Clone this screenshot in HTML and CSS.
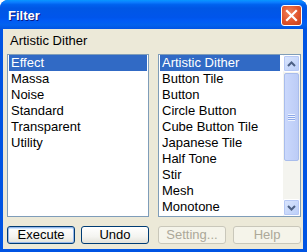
FILE: index.html
```html
<!DOCTYPE html>
<html lang="en">
<head>
<meta charset="UTF-8">
<title>Filter</title>
<link rel="stylesheet" href="styles.css">
</head>
<body>

<div class="window">
  <div class="titlebar">
    <span class="title">Filter</span>
    <button class="close-btn">
      <svg width="13" height="13" viewBox="0 0 13 13">
        <path d="M2 2 L11 11 M11 2 L2 11" stroke="#fff" stroke-width="2.2" stroke-linecap="square"/>
      </svg>
    </button>
  </div>

  <div class="client">
    <div class="current">Artistic Dither</div>

    <div class="lists">
      <ul class="listbox">
        <li class="selected">Effect</li>
        <li>Massa</li>
        <li>Noise</li>
        <li>Standard</li>
        <li>Transparent</li>
        <li>Utility</li>
      </ul>

      <div class="listbox scrolled">
        <ul class="items">
          <li class="selected">Artistic Dither</li>
          <li>Button Tile</li>
          <li>Button</li>
          <li>Circle Button</li>
          <li>Cube Button Tile</li>
          <li>Japanese Tile</li>
          <li>Half Tone</li>
          <li>Stir</li>
          <li>Mesh</li>
          <li>Monotone</li>
        </ul>
        <div class="scrollbar">
          <div class="scroll-btn">
            <svg width="9" height="6" viewBox="0 0 9 6"><path d="M1 5 L4.5 1.5 L8 5" fill="none" stroke="#4d6185" stroke-width="2"/></svg>
          </div>
          <div class="track">
            <div class="thumb">
              <div class="grip"></div>
            </div>
          </div>
          <div class="scroll-btn">
            <svg width="9" height="6" viewBox="0 0 9 6"><path d="M1 1 L4.5 4.5 L8 1" fill="none" stroke="#4d6185" stroke-width="2"/></svg>
          </div>
        </div>
      </div>
    </div>

    <div class="buttons">
      <div class="btn-group">
        <button class="btn focused">Execute</button>
        <button class="btn">Undo</button>
      </div>
      <div class="btn-group">
        <button class="btn" disabled>Setting...</button>
        <button class="btn" disabled>Help</button>
      </div>
    </div>
  </div>
</div>

</body>
</html>
```

FILE: styles.css
```css
* {
  margin: 0;
  padding: 0;
  box-sizing: border-box;
}

body {
  background: #fff;
  font-family: 'Liberation Sans', Arial, sans-serif;
  font-size: 13px;
  color: #000;
}

.window {
  width: 307px;
  height: 252px;
  background: #0054e3;
  border-radius: 8px 8px 0 0;
  display: flex;
  flex-direction: column;
  overflow: hidden;
}

.titlebar {
  height: 29px;
  display: flex;
  align-items: center;
  justify-content: space-between;
  padding: 0 5px 0 8px;
  background: linear-gradient(to bottom, #0997ff 0%, #0a7dff 8%, #0062ee 16%, #0057e5 28%, #0055eb 60%, #005bf5 72%, #0262ee 86%, #0054e3 100%);
}

.title {
  color: #fff;
  font-weight: bold;
  font-size: 13px;
  text-shadow: 1px 1px #0a1883;
  padding-top: 1px;
}

.close-btn {
  width: 21px;
  height: 21px;
  border: 1px solid #fff;
  border-radius: 3px;
  background: radial-gradient(circle at 40% 35%, #f0845d 0%, #e0532b 55%, #c4401c 100%);
  display: flex;
  align-items: center;
  justify-content: center;
  margin-top: 1px;
}

.client {
  flex: 1;
  margin: 0 4px 3px 3px;
  background: #ece9d8;
  padding: 4px 2px 5px 4px;
  display: flex;
  flex-direction: column;
}

.current {
  height: 16px;
  line-height: 16px;
  padding-left: 3px;
  margin-bottom: 5px;
}

.lists {
  display: grid;
  grid-template-columns: 142px 143px;
  column-gap: 9px;
  height: 163px;
}

.listbox {
  list-style: none;
  background: #fff;
  border: 1px solid #7f9db9;
  padding: 0 1px;
}

.listbox li {
  height: 16px;
  line-height: 16px;
  padding-left: 2px;
  white-space: nowrap;
}

.listbox li.selected {
  background: #316ac5;
  color: #fff;
}

.scrolled {
  display: flex;
  padding-right: 0;
}

.items {
  list-style: none;
  flex: 1;
  margin-right: 3px;
}

.scrollbar {
  width: 17px;
  display: flex;
  flex-direction: column;
  background: #f3f4f9;
}

.scroll-btn {
  height: 17px;
  border: 1px solid #fff;
  border-radius: 2px;
  background: linear-gradient(to bottom right, #dbe6fd, #b9cdf8);
  box-shadow: inset 0 0 0 1px #b6c8f5;
  display: flex;
  align-items: center;
  justify-content: center;
}

.track {
  flex: 1;
  padding: 1px 0;
  background: #f4f4ef;
}

.thumb {
  height: 88px;
  margin: 0 1px;
  border: 1px solid #a9bdec;
  border-radius: 2px;
  background: linear-gradient(to right, #cad8fc, #bcccf6);
  display: flex;
  align-items: center;
  justify-content: center;
}

.grip {
  width: 7px;
  height: 7px;
  background: repeating-linear-gradient(to bottom, #eef3fe 0, #eef3fe 1px, #8ca8e8 1px, #8ca8e8 2px);
}

.buttons {
  display: grid;
  grid-template-columns: 142px 143px;
  column-gap: 9px;
  margin-top: 9px;
}

.btn-group {
  display: flex;
  justify-content: space-between;
}

.btn {
  width: 68px;
  height: 18px;
  font-family: inherit;
  font-size: 13px;
  line-height: 14px;
  color: #000;
  border: 1px solid #003c74;
  border-radius: 3px;
  background: linear-gradient(to bottom, #fff 0%, #f4f4f0 60%, #e3e2da 100%);
}

.btn.focused {
  box-shadow: inset 0 0 0 1px #98b8ea, inset 0 1px 0 1px #cee7ff;
}

.btn:disabled {
  color: #aca899;
  border-color: #c9c7ba;
  background: #f5f4ea;
}
```
